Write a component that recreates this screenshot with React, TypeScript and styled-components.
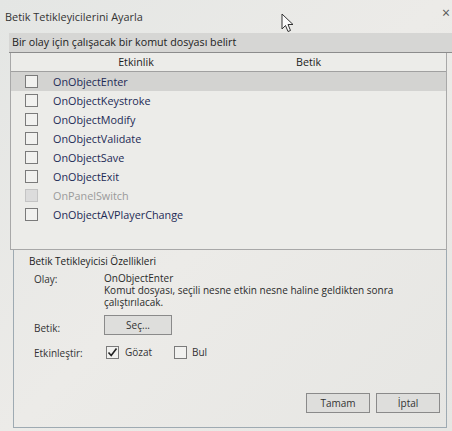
import styled, { createGlobalStyle } from "styled-components";

const GlobalStyle = createGlobalStyle`
  html, body {
    margin: 0;
    padding: 0;
    background: #e7e7e5;
  }
  body {
    font-family: "Open Sans", "Noto Sans", sans-serif;
    font-size: 10.7px;
    color: #2a2a2a;
  }
`;

const events = [
  { name: "OnObjectEnter", selected: true },
  { name: "OnObjectKeystroke" },
  { name: "OnObjectModify" },
  { name: "OnObjectValidate" },
  { name: "OnObjectSave" },
  { name: "OnObjectExit" },
  { name: "OnPanelSwitch", disabled: true },
  { name: "OnObjectAVPlayerChange" },
];

const App = () => {
  return (
    <Window>
      <GlobalStyle />
      <TitleBar>
        <Title>Betik Tetikleyicilerini Ayarla</Title>
        <Close>×</Close>
      </TitleBar>
      <Cursor width="14" height="20" viewBox="0 0 14 20">
        <path
          d="M1 1 L1 16 L4.5 12.5 L7 18.5 L9.5 17.5 L7 11.5 L12 11.5 Z"
          fill="#fafafa"
          stroke="#333"
          strokeWidth="1"
          strokeLinejoin="round"
        />
      </Cursor>

      <Band>Bir olay için çalışacak bir komut dosyası belirt</Band>
      <ListBox>
        <HeaderRow>
          <HeaderCell $width={250}>Etkinlik</HeaderCell>
          <HeaderCell $width={95}>Betik</HeaderCell>
        </HeaderRow>
        {events.map((ev) => (
          <Row key={ev.name} $selected={ev.selected}>
            <Box $disabled={ev.disabled} $gap={15} />
            <EventName $disabled={ev.disabled}>{ev.name}</EventName>
          </Row>
        ))}
      </ListBox>

      <Panel>
        <PanelTitle>Betik Tetikleyicisi Özellikleri</PanelTitle>
        <PropGrid>
          <Label>Olay:</Label>
          <Value>
            OnObjectEnter
            <br />
            Komut dosyası, seçili nesne etkin nesne haline geldikten sonra
            <br />
            çalıştırılacak.
          </Value>
          <Label $top={13}>Betik:</Label>
          <Value $top={7}>
            <Button $width={68}>Seç...</Button>
          </Value>
          <Label $top={11}>Etkinleştir:</Label>
          <Checks>
            <Check>
              <Box $gap={6}>
                <svg width="11" height="11" viewBox="0 0 11 11">
                  <path
                    d="M1.5 5.5 L4.2 8.5 L9.5 1.5"
                    fill="none"
                    stroke="#222"
                    strokeWidth="1.6"
                  />
                </svg>
              </Box>
              Gözat
            </Check>
            <Check>
              <Box $gap={5} />
              Bul
            </Check>
          </Checks>
        </PropGrid>
        <Footer>
          <Button $width={64}>Tamam</Button>
          <Button $width={64}>İptal</Button>
        </Footer>
      </Panel>
    </Window>
  );
};

export default App;

const Window = styled.div`
  position: relative;
  width: 452px;
  height: 431px;
  overflow: hidden;
  display: flex;
  flex-direction: column;
  background: linear-gradient(135deg, #e4e6e4 0%, #ecebe8 50%, #e6e6e3 100%);
`;

const TitleBar = styled.div`
  height: 33px;
  display: flex;
  align-items: center;
  justify-content: space-between;
  padding: 0 2px 0 5px;
`;

const Title = styled.span`
  font-size: 10.9px;
  color: #333;
`;

const Close = styled.span`
  font-size: 14px;
  color: #555;
  margin-top: -8px;
`;

const Cursor = styled.svg`
  position: absolute;
  left: 281px;
  top: 13px;
`;

const Band = styled.div`
  height: 19px;
  line-height: 19px;
  margin-left: 9px;
  padding-left: 3px;
  background: #d6d6d4;
  border-bottom: 1px solid #8c8c8c;
  color: #222;
`;

const ListBox = styled.div`
  margin: 0 5px 0 10px;
  height: 196px;
  border: 1px solid #a8a8a8;
  border-top: none;
  background: #ecece9;
`;

const HeaderRow = styled.div`
  display: flex;
  height: 18px;
  border-bottom: 1px solid #a0a0a0;
`;

const HeaderCell = styled.div<{ $width: number }>`
  width: ${(p) => p.$width}px;
  text-align: center;
  line-height: 19px;
  color: #1e1e1e;
  font-weight: 500;
`;

const Row = styled.div<{ $selected?: boolean }>`
  display: flex;
  align-items: center;
  height: 19px;
  padding-left: 14px;
  background: ${(p) => (p.$selected ? "#d3d3d1" : "transparent")};
`;

const Box = styled.span<{ $disabled?: boolean; $gap: number }>`
  display: inline-flex;
  align-items: center;
  justify-content: center;
  width: 11px;
  height: 11px;
  border: 1px solid ${(p) => (p.$disabled ? "#c4c4c4" : "#7a7a7a")};
  background: ${(p) => (p.$disabled ? "#dcdcdc" : "#f1f1ef")};
  margin-right: ${(p) => p.$gap}px;
  flex-shrink: 0;
`;

const EventName = styled.span<{ $disabled?: boolean }>`
  font-size: 10.8px;
  color: ${(p) => (p.$disabled ? "#9a9a9a" : "#1c2a55")};
`;

const Panel = styled.div`
  flex: 1;
  margin: 0 5px 3px 13px;
  border: 1px solid #9eaab2;
  border-top: none;
  display: flex;
  flex-direction: column;
  padding: 4px 0 0 15px;
`;

const PanelTitle = styled.div`
  font-size: 10px;
  color: #222;
  margin-bottom: 4px;
`;

const PropGrid = styled.div`
  display: grid;
  grid-template-columns: 70px 1fr;
  margin-left: 5px;
`;

const Label = styled.div<{ $top?: number }>`
  font-size: 10px;
  color: #333;
  margin-top: ${(p) => p.$top ?? 0}px;
`;

const Value = styled.div<{ $top?: number }>`
  font-size: 10px;
  line-height: 12px;
  color: #2a2a2a;
  margin-top: ${(p) => p.$top ?? 0}px;
`;

const Checks = styled.div`
  display: flex;
  align-items: center;
  margin-top: 9px;
  margin-left: 2px;
`;

const Check = styled.label`
  display: flex;
  align-items: center;
  width: 68px;
  font-size: 10px;
  color: #333;
`;

const Button = styled.button<{ $width: number }>`
  width: ${(p) => p.$width}px;
  height: 20px;
  border: 1px solid #8a8a8a;
  background: #dededc;
  font-family: "Open Sans", "Noto Sans", sans-serif;
  font-size: 10px;
  color: #333;
  padding: 0;
`;

const Footer = styled.div`
  margin-top: auto;
  margin-bottom: 14px;
  display: flex;
  justify-content: flex-end;
  gap: 6px;
  padding-right: 6px;
`;
